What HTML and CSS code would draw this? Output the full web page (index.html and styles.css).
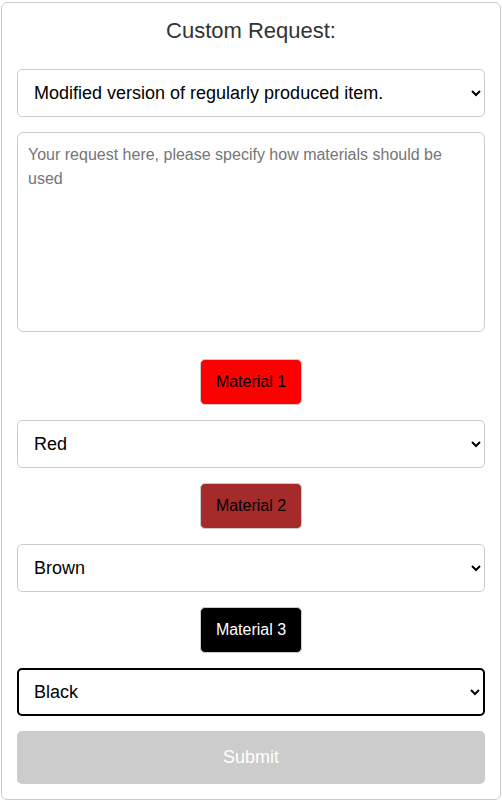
FILE: index.html
```html
<!DOCTYPE html>
<html lang="en">
<head>
<meta charset="utf-8">
<title>Custom Request</title>
<link rel="stylesheet" href="styles.css">
</head>
<body>
<form class="card">
  <h2 class="title">Custom Request:</h2>
  <select class="field">
    <option>Modified version of regularly produced item.</option>
  </select>
  <textarea class="request" placeholder="Your request here, please specify how materials should be used"></textarea>
  <button type="button" class="swatch swatch-red">Material 1</button>
  <select class="field">
    <option>Red</option>
  </select>
  <button type="button" class="swatch swatch-brown">Material 2</button>
  <select class="field">
    <option>Brown</option>
  </select>
  <button type="button" class="swatch swatch-black">Material 3</button>
  <select class="field field-active">
    <option>Black</option>
  </select>
  <button type="button" class="submit">Submit</button>
</form>
</body>
</html>
```

FILE: styles.css
```css
* { box-sizing: border-box; }
html, body { margin: 0; padding: 0; background: #fff; }
body {
  font-family: "Liberation Sans", Arial, sans-serif;
  padding: 2px 1px;
}
.card {
  width: 500px;
  height: 798px;
  border: 1px solid #ccc;
  border-radius: 6px;
  padding: 15px;
  display: flex;
  flex-direction: column;
  align-items: stretch;
  gap: 15px;
}
.title {
  margin: 1px 0 11px;
  font-size: 22px;
  font-weight: normal;
  line-height: 24px;
  color: #333;
  text-align: center;
}
.field {
  flex: none;
  height: 48px;
  width: 100%;
  border: 1px solid #ccc;
  border-radius: 5px;
  background: #fff;
  color: #000;
  font-family: inherit;
  font-size: 18px;
  padding: 0 10px 0 12px;
}
.field-active {
  border: 2px solid #000;
  padding-left: 11px;
}
.request {
  flex: none;
  height: 200px;
  width: 100%;
  border: 1px solid #ccc;
  border-radius: 6px;
  padding: 10px;
  font-family: inherit;
  font-size: 16px;
  line-height: 24px;
  resize: none;
  margin-bottom: 12px;
}
.request::placeholder { color: #757575; }
.swatch {
  flex: none;
  align-self: center;
  width: 102px;
  height: 46px;
  border: 1px solid #ccc;
  border-radius: 5px;
  font-family: inherit;
  font-size: 16px;
  color: #000;
  padding: 0;
}
.swatch-red { background: #ff0000; }
.swatch-brown { background: #a52a2a; }
.swatch-black { background: #000; color: #fff; }
.submit {
  flex: none;
  height: 53px;
  width: 100%;
  border: none;
  border-radius: 5px;
  background: #ccc;
  color: #fff;
  font-family: inherit;
  font-size: 18px;
}
```
